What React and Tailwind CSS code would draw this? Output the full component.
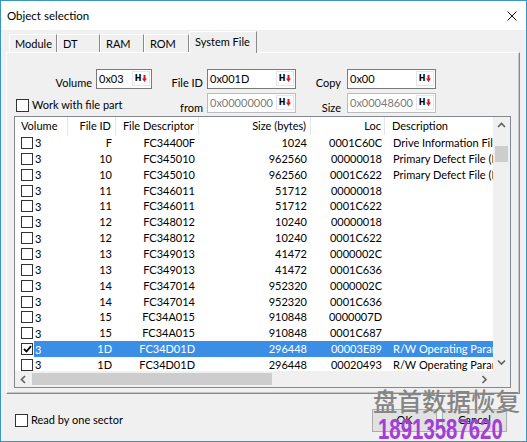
import React from "react";

const rows = [
  ["F", "FC34400F", "1024", "0001C60C", "Drive Information File (DIF)"],
  ["10", "FC345010", "962560", "00000018", "Primary Defect File (PDF)"],
  ["10", "FC345010", "962560", "0001C622", "Primary Defect File (PDF)"],
  ["11", "FC346011", "51712", "00000018", ""],
  ["11", "FC346011", "51712", "0001C622", ""],
  ["12", "FC348012", "10240", "00000018", ""],
  ["12", "FC348012", "10240", "0001C622", ""],
  ["13", "FC349013", "41472", "0000002C", ""],
  ["13", "FC349013", "41472", "0001C636", ""],
  ["14", "FC347014", "952320", "0000002C", ""],
  ["14", "FC347014", "952320", "0001C636", ""],
  ["15", "FC34A015", "910848", "0000007D", ""],
  ["15", "FC34A015", "910848", "0001C687", ""],
  ["1D", "FC34D01D", "296448", "00003E89", "R/W Operating Parameters", true],
  ["1D", "FC34D01D", "296448", "00020493", "R/W Operating Parameters"],
];

function Check({ checked, size = "w-[12px] h-[12px]" }) {
  return (
    <div className={`${size} shrink-0 border border-[#333333] bg-white flex items-center justify-center`}>
      {checked && (
        <svg width="9" height="8" viewBox="0 0 9 8">
          <path d="M1 4 L3.5 6.5 L8 1.2" stroke="#000" strokeWidth="1.8" fill="none" />
        </svg>
      )}
    </div>
  );
}

function HexBtn() {
  return (
    <div className="w-[18px] h-[15px] mt-[1px] mr-[1px] flex items-center justify-center gap-[1px] bg-white border border-[#e6e6e6]">
      <span className="text-[8px] font-bold leading-none font-['DejaVu_Sans',sans-serif] text-black">H</span>
      <svg width="5" height="7" viewBox="0 0 5 7">
        <path d="M1.5 0 H3.5 V3.5 H5 L2.5 7 L0 3.5 H1.5 Z" fill="#d61a1a" />
      </svg>
    </div>
  );
}

function Field({ w, value, disabled }) {
  return (
    <div
      className={`${w} h-[20px] shrink-0 flex bg-white border ${
        disabled ? "border-[#bcbcbc] text-[#7a7a7a]" : "border-[#7a7a7a] text-black"
      }`}
    >
      <span className="flex-1 pl-[2px] pt-[1px] leading-[15px] whitespace-nowrap overflow-hidden">{value}</span>
      <HexBtn />
    </div>
  );
}

function Chevron({ dir }) {
  const d = {
    up: "M1 5 L4.5 1.5 L8 5",
    down: "M1 1.5 L4.5 5 L8 1.5",
    left: "M5 1 L1.5 4.5 L5 8",
    right: "M1.5 1 L5 4.5 L1.5 8",
  }[dir];
  const vert = dir === "up" || dir === "down";
  return (
    <svg width={vert ? 9 : 7} height={vert ? 7 : 9} viewBox={vert ? "0 0 9 7" : "0 0 7 9"}>
      <path d={d} stroke="#606060" strokeWidth="1.6" fill="none" />
    </svg>
  );
}

function Tab({ label, w, selected }) {
  if (selected) {
    return (
      <div className={`${w} h-[22px] mb-[-1px] relative z-10 bg-[#f0f0f0] border-l border-t border-white border-r border-r-[#8a8a8a] pl-[5px] pt-[2px] leading-[15px]`}>
        {label}
      </div>
    );
  }
  return (
    <div className={`${w} h-[18px] bg-[#f0f0f0] border-l border-t border-white border-r border-r-[#8a8a8a] pl-[5px] pt-[1px] leading-[15px]`}>
      {label}
    </div>
  );
}

export default function App() {
  return (
    <div className="w-[527px] h-[442px] relative overflow-hidden bg-[#f0f0f0] border border-[#3b95c4] flex flex-col text-[11px] text-black font-['Lato','Noto_Sans',sans-serif]">
      {/* Title bar */}
      <div className="h-[29px] shrink-0 bg-white flex items-center justify-between pl-[6px] pr-[9px]">
        <span className="leading-none text-[11.5px]">Object selection</span>
        <svg width="10" height="10" viewBox="0 0 10 10">
          <path d="M0.5 0.5 L9.5 9.5 M9.5 0.5 L0.5 9.5" stroke="#111" strokeWidth="1" />
        </svg>
      </div>

      {/* Tabs + panel */}
      <div className="px-[5px] pr-[6px] shrink-0">
        <div className="h-[22px] flex items-end pl-[3px]">
          <Tab label="Module" w="w-[48px]" />
          <Tab label="DT" w="w-[43px]" />
          <Tab label="RAM" w="w-[44px]" />
          <Tab label="ROM" w="w-[45px]" />
          <Tab label="System File" w="w-[68px]" selected />
        </div>
        <div className="h-[342px] border-l border-t border-white border-r border-b border-r-[#8a8a8a] border-b-[#8a8a8a] shadow-[inset_-1px_-1px_0_#c8c8c8] pt-[16px]">
          {/* Row 1 */}
          <div className="h-[20px] flex items-end">
            <div className="w-[85px] shrink-0 text-right leading-[14px] mb-[-1px]">Volume</div>
            <div className="ml-[4px]"><Field w="w-[56px]" value="0x03" /></div>
            <div className="w-[51px] shrink-0 text-right leading-[14px] mb-[-1px]">File ID</div>
            <div className="ml-[4px]"><Field w="w-[89px]" value="0x001D" /></div>
            <div className="w-[45px] shrink-0 text-right leading-[14px] mb-[-1px]">Copy</div>
            <div className="ml-[6px]"><Field w="w-[89px]" value="0x00" /></div>
          </div>
          {/* Row 2 */}
          <div className="h-[20px] mt-[4px] flex items-end">
            <div className="w-[145px] shrink-0 flex items-center gap-[3px] pl-[9px] mb-[1px]">
              <Check size="w-[13px] h-[13px]" />
              <span className="leading-[14px]">Work with file part</span>
            </div>
            <div className="w-[51px] shrink-0 text-right leading-[14px] mb-[-2px]">from</div>
            <div className="ml-[4px]"><Field w="w-[89px]" value="0x00000000" disabled /></div>
            <div className="w-[45px] shrink-0 text-right leading-[14px] mb-[-2px]">Size</div>
            <div className="ml-[6px]"><Field w="w-[89px]" value="0x00048600" disabled /></div>
          </div>

          {/* List */}
          <div className="mt-[3px] ml-[7px] w-[497px] h-[272px] border border-[#828790] bg-white flex">
            <div className="w-[478px] flex flex-col">
              {/* header */}
              <div className="h-[18px] shrink-0 flex leading-[17px]">
                <div className="w-[53px] pl-[6px] border-r border-[#e5e5e5]">Volume</div>
                <div className="w-[48px] pr-[4px] text-right border-r border-[#e5e5e5]">File ID</div>
                <div className="w-[83px] pr-[4px] text-right border-r border-[#e5e5e5]">File Descriptor</div>
                <div className="w-[112px] pr-[4px] text-right border-r border-[#e5e5e5]">Size (bytes)</div>
                <div className="w-[74px] pr-[3px] text-right border-r border-[#e5e5e5]">Loc</div>
                <div className="flex-1 pl-[7px] whitespace-nowrap overflow-hidden">Description</div>
              </div>
              {/* rows */}
              <div className="h-[236px] shrink-0 overflow-hidden">
                {rows.map((r, i) => {
                  const sel = r[5];
                  const txt = sel ? "text-white" : "text-black";
                  return (
                    <div key={i} className="h-[15.86px] flex items-center leading-[15px]">
                      <div className="w-[53px] h-full shrink-0 flex items-center">
                        <div className="pl-[6px] pr-[1px] h-full flex items-center bg-white">
                          <Check checked={sel} />
                        </div>
                        <div className={`flex-1 h-full flex items-center pl-[1px] ${sel ? "bg-[#3a8ee6] text-white" : ""}`}>3</div>
                      </div>
                      <div className={`flex-1 h-full flex ${sel ? "bg-[#3a8ee6]" : ""} ${txt}`}>
                        <div className="w-[48px] pr-[4px] text-right">{r[0]}</div>
                        <div className="w-[83px] pr-[4px] text-right">{r[1]}</div>
                        <div className="w-[112px] pr-[4px] text-right">{r[2]}</div>
                        <div className="w-[74px] pr-[3px] text-right">{r[3]}</div>
                        <div className="flex-1 pl-[8px] whitespace-nowrap overflow-hidden">{r[4]}</div>
                      </div>
                    </div>
                  );
                })}
              </div>
              {/* horizontal scrollbar */}
              <div className="h-[16px] shrink-0 bg-[#f0f0f0] flex items-center">
                <div className="w-[17px] h-full flex items-center justify-center"><Chevron dir="left" /></div>
                <div className="w-[240px] h-[12px] bg-[#cdcdcd]"></div>
                <div className="flex-1"></div>
                <div className="w-[17px] h-full flex items-center justify-center"><Chevron dir="right" /></div>
              </div>
            </div>
            {/* vertical scrollbar */}
            <div className="w-[17px] flex flex-col bg-[#f0f0f0]">
              <div className="h-[17px] shrink-0 flex items-center justify-center"><Chevron dir="up" /></div>
              <div className="flex-1 px-[2px]">
                <div className="mt-[12px] h-[16px] bg-[#cdcdcd]"></div>
              </div>
              <div className="h-[17px] shrink-0 flex items-center justify-center"><Chevron dir="down" /></div>
              <div className="h-[16px] shrink-0 bg-[#f0f0f0]"></div>
            </div>
          </div>
        </div>
      </div>

      {/* Bottom */}
      <div className="flex-1 flex items-center pl-[14px] pr-[19px] pt-[5px]">
        <div className="flex items-center gap-[3px]">
          <Check size="w-[13px] h-[13px]" />
          <span className="leading-[14px]">Read by one sector</span>
        </div>
        <div className="flex-1"></div>
        <div className="w-[65px] h-[23px] border border-[#adadad] bg-[#e1e1e1] flex items-center justify-center">OK</div>
        <div className="w-[65px] h-[23px] ml-[5px] border border-[#adadad] bg-[#e1e1e1] flex items-center justify-center">Cancel</div>
      </div>

      {/* Watermark overlay */}
      <div className="absolute left-[372px] top-[384px] pointer-events-none text-[24.5px] leading-[32px] font-medium text-[#858585] font-['Noto_Sans_CJK_SC',sans-serif] whitespace-nowrap">
        盘首数据恢复
      </div>
      <div className="absolute left-[377px] top-[412px] pointer-events-none text-[30px] leading-[32px] font-bold text-[#a33fd6] font-['Liberation_Sans',sans-serif] whitespace-nowrap origin-left scale-x-[0.68]">
        18913587620
      </div>
    </div>
  );
}
